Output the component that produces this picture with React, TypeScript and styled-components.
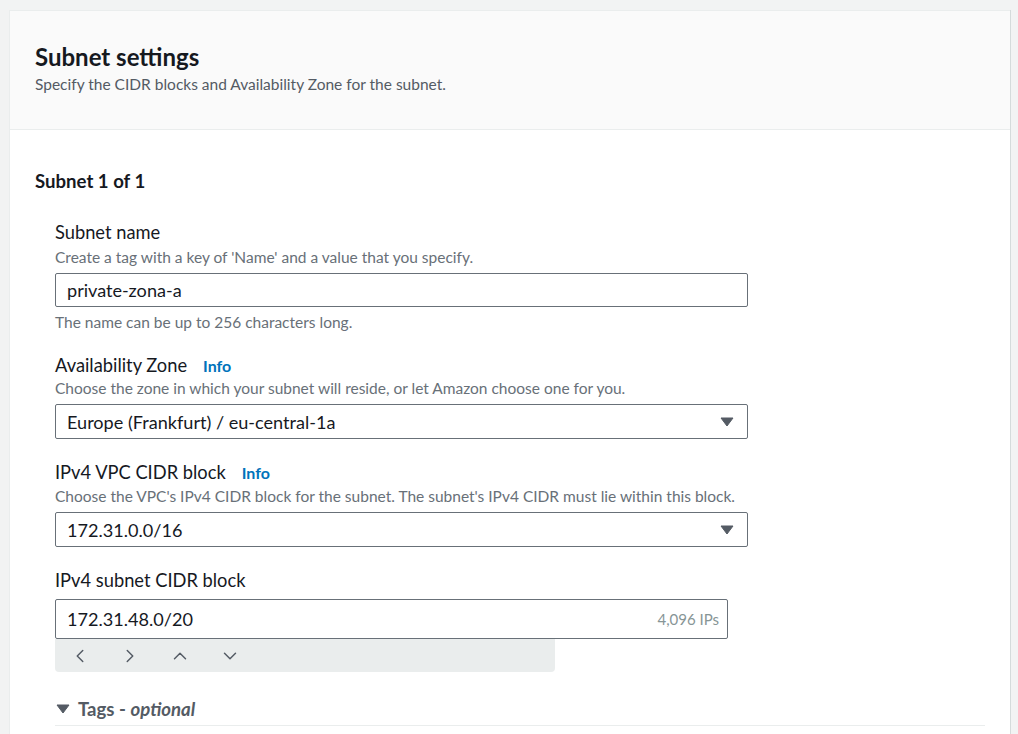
import React from "react";
import styled, { createGlobalStyle } from "styled-components";
import { ChevronLeft, ChevronRight, ChevronUp, ChevronDown } from "lucide-react";

const FONT = `Lato, "Liberation Sans", Arial, sans-serif`;

const Global = createGlobalStyle`
  html, body { margin: 0; padding: 0; background: #f2f3f3; }
  body { font-family: ${FONT}; color: #16191f; }
  * { box-sizing: border-box; }
`;

const Page = styled.div`
  padding: 10px 8px 0 10px;
  min-height: 734px;
`;

const Card = styled.section`
  background: #fff;
  border-top: 1px solid #eaeded;
  box-shadow: 1px 0 0 0 #d5dbdb, -1px 0 0 0 #eaeded;
  min-height: 724px;
`;

const Header = styled.header`
  background: #fafafa;
  border-bottom: 1px solid #eaeded;
  padding: 32px 25px 35px 25px;
`;

const Title = styled.h2`
  margin: 0;
  font-size: 24px;
  line-height: 28px;
  font-weight: 700;
  color: #16191f;
`;

const Subtitle = styled.p`
  margin: 3px 0 0;
  font-size: 15.5px;
  line-height: 20px;
  color: #545b64;
`;

const Body = styled.div`
  padding: 39px 25px 0 25px;
`;

const SubHeading = styled.h3`
  margin: 0;
  font-size: 18.6px;
  line-height: 24px;
  font-weight: 700;
`;

const Fields = styled.div`
  padding-left: 20px;
  display: flex;
  flex-direction: column;
`;

const Field = styled.div<{ $top: number }>`
  margin-top: ${(p) => p.$top}px;
  display: flex;
  flex-direction: column;
`;

const LabelRow = styled.div`
  display: flex;
  align-items: baseline;
  gap: 16px;
`;

const Label = styled.label`
  font-size: 18.3px;
  line-height: 24px;
  color: #16191f;
`;

const InfoLink = styled.a`
  font-size: 16px;
  font-weight: 700;
  color: #0073bb;
  text-decoration: none;
`;

const Desc = styled.div<{ $top?: number }>`
  margin-top: ${(p) => p.$top ?? 1}px;
  font-size: 15.5px;
  line-height: 20px;
  color: #687078;
`;

const InputBox = styled.div<{ $w: number; $h: number; $top: number }>`
  margin-top: ${(p) => p.$top}px;
  width: ${(p) => p.$w}px;
  height: ${(p) => p.$h}px;
  border: 1px solid #687078;
  border-radius: 2px;
  background: #fff;
  display: flex;
  align-items: center;
  padding: 0 11px;
  font-size: 18.1px;
  color: #16191f;
`;

const Value = styled.span`
  flex: 1;
`;

const Suffix = styled.span`
  font-size: 15px;
  color: #879596;
  margin-right: -3px;
`;

const Caret = styled.svg`
  width: 14px;
  height: 10px;
  margin-right: 2px;
`;

const Constraint = styled.div`
  margin-top: 5px;
  font-size: 15.5px;
  line-height: 20px;
  color: #687078;
`;

const Stepper = styled.div`
  width: 500px;
  height: 33px;
  background: #eaeded;
  border-radius: 0 0 4px 4px;
  display: flex;
  align-items: center;
`;

const StepButton = styled.span`
  width: 50px;
  display: flex;
  justify-content: center;
  color: #545b64;
`;

const Expander = styled.div`
  margin-top: 25px;
  width: 930px;
  border-bottom: 1px solid #eaeded;
  padding: 0 0 4px 0;
  display: flex;
  align-items: center;
  gap: 8px;
  font-size: 18.6px;
  line-height: 24px;
  font-weight: 700;
  color: #545b64;
`;

const Tri = styled.svg`
  width: 14px;
  height: 10px;
  margin-left: 1px;
`;

const Optional = styled.i`
  font-weight: 700;
`;

const DownTriangle = ({ as: C = Caret }: { as?: typeof Caret }) => (
  <C viewBox="0 0 14 10">
    <path d="M1 1 H13 L7 9 Z" fill="#545b64" stroke="#545b64" strokeLinejoin="round" strokeWidth="1" />
  </C>
);

export default function App() {
  return (
    <>
      <Global />
      <Page>
        <Card>
          <Header>
            <Title>Subnet settings</Title>
            <Subtitle>Specify the CIDR blocks and Availability Zone for the subnet.</Subtitle>
          </Header>
          <Body>
            <SubHeading>Subnet 1 of 1</SubHeading>
            <Fields>
              <Field $top={27}>
                <Label>Subnet name</Label>
                <Desc $top={3}>Create a tag with a key of 'Name' and a value that you specify.</Desc>
                <InputBox $w={693} $h={34} $top={6}>
                  <Value>private-zona-a</Value>
                </InputBox>
                <Constraint>The name can be up to 256 characters long.</Constraint>
              </Field>
              <Field $top={21}>
                <LabelRow>
                  <Label>Availability Zone</Label>
                  <InfoLink href="#">Info</InfoLink>
                </LabelRow>
                <Desc>Choose the zone in which your subnet will reside, or let Amazon choose one for you.</Desc>
                <InputBox $w={693} $h={35} $top={6}>
                  <Value>Europe (Frankfurt) / eu-central-1a</Value>
                  <DownTriangle />
                </InputBox>
              </Field>
              <Field $top={21}>
                <LabelRow>
                  <Label>IPv4 VPC CIDR block</Label>
                  <InfoLink href="#">Info</InfoLink>
                </LabelRow>
                <Desc $top={2}>
                  Choose the VPC's IPv4 CIDR block for the subnet. The subnet's IPv4 CIDR must lie within this block.
                </Desc>
                <InputBox $w={693} $h={35} $top={6}>
                  <Value>172.31.0.0/16</Value>
                  <DownTriangle />
                </InputBox>
              </Field>
              <Field $top={21}>
                <Label>IPv4 subnet CIDR block</Label>
                <InputBox $w={673} $h={40} $top={7}>
                  <Value>172.31.48.0/20</Value>
                  <Suffix>4,096 IPs</Suffix>
                </InputBox>
                <Stepper>
                  <StepButton><ChevronLeft size={22} strokeWidth={1.6} /></StepButton>
                  <StepButton><ChevronRight size={22} strokeWidth={1.6} /></StepButton>
                  <StepButton><ChevronUp size={22} strokeWidth={1.6} /></StepButton>
                  <StepButton><ChevronDown size={22} strokeWidth={1.6} /></StepButton>
                </Stepper>
              </Field>
              <Expander>
                <DownTriangle as={Tri} />
                <span>
                  Tags - <Optional>optional</Optional>
                </span>
              </Expander>
            </Fields>
          </Body>
        </Card>
      </Page>
    </>
  );
}
